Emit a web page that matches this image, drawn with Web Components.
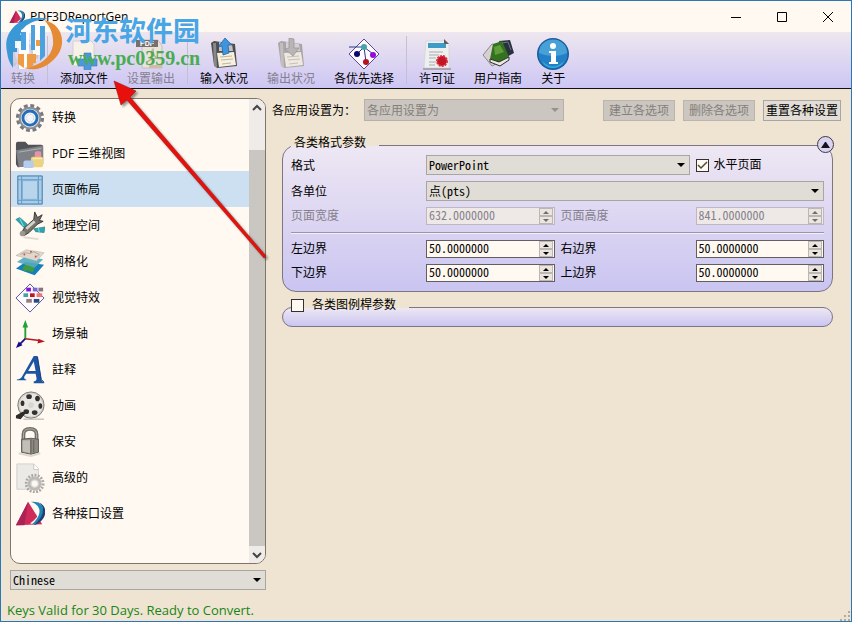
<!DOCTYPE html>
<html lang="zh">
<head>
<meta charset="utf-8">
<title>PDF3DReportGen</title>
<style>
    html, body {
        margin: 0;
        height: 100%;
    }
    body {
        font: 12px/16px "Liberation Sans", "Noto Sans CJK SC", sans-serif;
        color: #000;
    }
</style>
</head>
<body>
<report-app></report-app>

<script>
const ICONS = {
    logo: `<path d="M1 28 14 3 29 27z" fill="#d02a5a"/><path d="M14 3 1 28h9z" fill="#ab2257"/><path d="M18 5c12 2 10 13-2 21l5 1c12-9 11-22-3-22z" fill="#fff9f1"/><path d="M17 3c15-2 18 13 4 24h-3c11-10 11-20-1-24z" fill="#1e86b5"/><path d="M20 3c14 1 12 15 0 25 17-6 16-25 0-25z" fill="#1d3f7a"/>`,
    convert: `<circle cx="16" cy="16" r="13" fill="none" stroke="#c9c4cf" stroke-width="5" stroke-dasharray="4 3"/><circle cx="16" cy="16" r="10" fill="none" stroke="#d2cdd8" stroke-width="4"/>`,
    addFile: `<path d="M5 3h18l3 3v22H5z" fill="#f8f1e8" stroke="#d5cfd5"/><path d="M16 15h7v6h6v7h-6v5h-7v-5h-6v-7h6z" fill="#4d97dc" stroke="#3978c0" stroke-width=".6"/>`,
    setOutput: `<path d="M7 2h16l4 6v22H7z" fill="#eae3dc" stroke="#c4bec0"/><path d="M1 2h22v7H1z" fill="#77706d"/><text x="12" y="8" font-size="7" font-weight="700" font-family="Liberation Sans" text-anchor="middle" fill="#fff">PDF</text><path d="M12 24c6-3 7-10 6-13-3 2 2 10 8 10-5-2-10 0-14 3z" fill="none" stroke="#c5b39a" stroke-width="1.5"/><path d="M14 27h13v3H14z" fill="#d3bba9"/>`,
    input: `<path d="m3 5 3-2 21 3 2 22-20 2-3-3z" fill="#4e4e50"/><path d="m5 5 1 23 3 2-1-25z" fill="#8a8888"/><path d="m9 15 17-1 2 13-17 2z" fill="#f6f0dc"/><path d="m12 19 12-1m-11 4 12-1m-11 5 9-1" stroke="#bcb6a6"/><path d="m11 4 13 2 1 7H11z" fill="#c3c2c6"/><path d="m17 0 7 7h-4l1 8-6 2-1-9-4 1z" fill="#3f95dd" stroke="#175a9d" stroke-width=".7"/>`,
    output: `<path d="m3 5 3-2 21 3 2 22-20 2-3-3z" fill="#a9a6a7"/><path d="m5 5 1 23 3 2-1-25z" fill="#c3bfc0"/><path d="m9 15 17-1 2 13-17 2z" fill="#eee8df"/><path d="m12 19 12-1m-11 4 12-1m-11 5 9-1" stroke="#c6c0ba"/><path d="m11 4 13 2 1 7H11z" fill="#d4d1d4"/><path d="m14 0 5 1v9h5l-6 8-8-7 4-1z" fill="#b9b4b6" stroke="#969094" stroke-width=".7"/>`,
    prefs: `<path d="M16 1 31 16 16 31 1 16z" fill="#fffaff" stroke="#554a9a"/><path d="M1 9h15M16 9 9 16M16 9l9 7M16 9l2 15" stroke="#283b80"/><circle cx="16" cy="9" r="3" fill="#49a3ac"/><circle cx="9" cy="16" r="3" fill="#07076e"/><circle cx="25" cy="17" r="3" fill="#9709e3"/><circle cx="18" cy="24" r="3" fill="#b5121d"/>`,
    license: `<path d="M5 3h20l3 3v24H3z" fill="#edf0ee" stroke="#d2d0d2" stroke-width=".6"/><path d="M7 5h18v5H7z" fill="#3c9bc7"/><path d="m23 1 5 5h-5z" fill="#665c60"/><path d="M8 14h14M8 17h10M8 20h7M8 24h7M8 27h6" stroke="#a9aaae"/><path d="M2 31h28" stroke="#aaa4b0" stroke-width="2"/><circle cx="21" cy="23" r="5" fill="#c41525" stroke="#da3041" stroke-width="2" stroke-dasharray="2 1"/>`,
    guide: `<path d="m1 17 9-11 12 3-6 16-6 3z" fill="#d6d0d0" stroke="#8e888c"/><path d="m17 3 11-1 4 13-9 5z" fill="#28313d"/><path d="m11 6 9-3 7 16-10 5-9-3z" fill="#35721f"/><path d="m8 21 9 3 10-5v3l-9 6-10-4z" fill="#eee9e4" stroke="#282f2a"/><path d="m12 9 6-2 4 7-9 3z" fill="#5e9d3a"/><path d="m20 5 6-1 3 8" fill="none" stroke="#6d7986"/>`,
    about: `<circle cx="16" cy="16" r="16" fill="#1a5c9e"/><circle cx="16" cy="16" r="14.500" fill="#2480c6"/><path d="M2 15C2-3 30-3 30 15c-8 4-19 4-28 0z" fill="#5bb0df" opacity=".65"/><path d="M5 23q11 11 22 0-3 7-11 7T5 23z" fill="#37c0ed" opacity=".7"/><circle cx="16" cy="8" r="3" fill="#fff"/><path d="M12 13h7v11h2v2h-9v-2h2v-9h-2z" fill="#fff"/>`,
    gear: `<circle cx="16" cy="16" r="13" fill="none" stroke="#77797e" stroke-width="4" stroke-dasharray="4 2.800"/><circle cx="16" cy="16" r="11" fill="#d6d8db" stroke="#8b8f96" stroke-width="2"/><circle cx="16" cy="16" r="7.500" fill="#f2f5fa" stroke="#246eb9" stroke-width="3"/><circle cx="16" cy="16" r="4" fill="none" stroke="#c3cfdf" stroke-dasharray="2 1"/>`,
    folder: `<path d="M1 5q0-2 2-2h8l3 3h14q2 0 2 2v19L3 30 1 27z" fill="#505256"/><path d="m1 12 29-5v20L4 30z" fill="#7e8187"/><path d="m4 14 24-4" stroke="#b2b3b8"/><rect x="21" y="13" width="7" height="7" rx="2" fill="#e594a1"/><rect x="17" y="19" width="13" height="11" rx="2" fill="#eed37f"/><path d="M19 21h10" stroke="#fff1bd"/><rect x="9" y="23" width="11" height="8" rx="2" fill="#b4cdec"/>`,
    layout: `<path d="M3 1h26v30H3z" fill="#a9cde8" stroke="#3b719d"/><path d="M7 1v30M25 1v30M3 5h26M3 27h26" stroke="#5f9bc8"/><path d="M8 6h16v20H8z" fill="#b8d5eb" stroke="#7caed3"/>`,
    satellite: `<path d="m1 9 4-2 8 7-3 4zM20 19l12-2-1 6-9-1z" fill="#28a9b2" stroke="#277982" stroke-width=".7"/><path d="m5 8 4 8M25 18l1 5" stroke="#97dfe0"/><path d="m7 23 3-5 10-9 5 4-10 10-5 3z" fill="#77746c" stroke="#34332f"/><path d="m12 19 9-8" stroke="#d5d2c7" stroke-width="3"/><path d="m20 9 1-8 3 6 5-3-3 6 4 1-6 3" fill="#706b68" stroke="#3a3634"/><circle cx="8" cy="24" r="3" fill="#9c988f"/><path d="m9 28 16 2" stroke="#dedbd3" stroke-width="2"/>`,
    grid: `<path d="m1 23 10-7 20 3-10 11z" fill="#167fb9"/><path d="m8 22 5-5 9 2-3 8-6-2-3 1z" fill="#3f9b3e"/><path d="m2 16 9-6 19 3-9 9z" fill="#52a8bf" opacity=".9"/><path d="m1 9 11-6 19 3-8 9z" fill="#ddd8d0" stroke="#aaa79e" stroke-width=".5"/><path d="m6 8 4-2 6 1 4-2 6 3-5 4" fill="none" stroke="#c7a18f"/><circle cx="10" cy="8" r="1" fill="#c45246"/><circle cx="17" cy="5" r="1" fill="#c45246"/><circle cx="22" cy="10" r="1" fill="#c45246"/>`,
    effects: `<path d="M16 1 31 16 16 31 1 16z" fill="#fffaff" stroke="#504f8c"/><path d="M12 5h5v4h-5z" fill="#8910d5"/><path d="M19 5h5v4h-5z" fill="#7866d6"/><path d="M25 5h5v4h-5z" fill="#84718d"/><path d="M9 11h5v4H9z" fill="#43a2a7"/><path d="M16 11h5v4h-5z" fill="#bb1820"/><path d="M23 11h6v4h-6z" fill="#ed7774"/><path d="M12 17h6v4h-6z" fill="#967f7d"/><path d="M20 17h6v4h-6z" fill="#254b82"/>`,
    axes: `<path d="M11 21V6" stroke="#1fa332" stroke-width="2"/><path d="m11 1 3 8H8z" fill="#1fa332"/><path d="m11 21 15 2" stroke="#b21a22" stroke-width="1.500"/><path d="m32 24-8 2 1-5z" fill="#b21a22"/><path d="m11 21-6 6" stroke="#1d1487" stroke-width="2"/><path d="m1 31 3-7 4 4z" fill="#15088e"/>`,
    note: `<path fill-rule="evenodd" d="M2 26q4 0 6-4L20 1h4l4 24q0 3 3 4v1H20v-2q3 0 3-3l-1-5H12l-2 3q-1 3 2 3v1H2zM14 17h8L20 7z" fill="#1d55a3"/><path d="m24 2 4 24 3 3" fill="none" stroke="#153a79"/>`,
    film: `<circle cx="17" cy="15" r="14" fill="#d3d2d0" stroke="#777572"/><circle cx="17" cy="15" r="12" fill="#e9e7e3"/><g fill="#34302d"><ellipse cx="15" cy="6" rx="3" ry="2.500"/><ellipse cx="24" cy="8" rx="2.500" ry="3"/><ellipse cx="27" cy="16" rx="2" ry="3"/><ellipse cx="21" cy="23" rx="3" ry="2.500"/><ellipse cx="12" cy="22" rx="3" ry="2.500"/><ellipse cx="8" cy="13" rx="2" ry="3"/></g><circle cx="17" cy="15" r="3" fill="#d8d6d3"/><path d="m8 22 4 1-6 7-5-1v-3z" fill="#302b29"/><path d="M9 30h22" stroke="#aaa49d"/>`,
    lock: `<path d="M9 14V8q0-6 7-6t7 6v6" fill="none" stroke="#716d68" stroke-width="4"/><path d="M9 14V8q0-6 7-6t7 6v6" fill="none" stroke="#b8b5ae"/><path d="m7 13 10-1 8 1v14l-8 2-10-2z" fill="#8d8a83" stroke="#5b5752"/><path d="M8 14h8v14l-8-2z" fill="#c2bfb7"/><path d="M17 13v15M20 14v13" stroke="#615c55"/><path d="m4 28 13 3 10-3" fill="none" stroke="#ddd7cf" stroke-width="2"/>`,
    advanced: `<path d="M2 1h18l5 5v22H2z" fill="#eceae7" stroke="#d0ceca"/><path d="M20 1v6h5" fill="#fff" stroke="#c5c3bf"/><circle cx="21" cy="22" r="9" fill="none" stroke="#aaa7a4" stroke-width="3" stroke-dasharray="2 1.500"/><circle cx="21" cy="22" r="6" fill="#dedbd8" stroke="#bcb9b6" stroke-width="3"/><circle cx="21" cy="22" r="3" fill="#fff8f0"/>`,
};

const icon = (name, size = 32) => `<svg width="${size}" height="${size}" viewBox="0 0 32 32" fill="none" aria-hidden="true">${ICONS[name]}</svg>`;

// Base class, every element clones its own markup into a ShadowDOM
class Component extends HTMLElement{
    constructor(){
        super();
        let template = document.createElement('template');
        template.innerHTML = '<style>* { box-sizing: border-box; } button, input, select { font: inherit; color: inherit; margin: 0; } svg { display: block; flex: none; }</style>' + this.markup();
        this.attachShadow({mode: 'open'}).append(template.content.cloneNode(true));
    }
}

class TitleBar extends Component{
    markup(){
        return `
            <style>
                :host {
                    display: flex;
                    align-items: center;
                    height: 31px;
                    padding-left: 8px;
                    background: #fff9f1;
                    font-family: "Open Sans", sans-serif;
                }
                span { flex: 1; margin-left: 5px; }
                button {
                    display: grid;
                    place-items: center;
                    width: 46px;
                    height: 30px;
                    padding: 0;
                    border: 0;
                    background: none;
                }
            </style>
            ${icon('logo', 16)}
            <span><slot></slot></span>
            <button aria-label="Minimize"><svg width="12" height="12" stroke="#000"><path d="M1 6.500h10"/></svg></button>
            <button aria-label="Maximize"><svg width="12" height="12" stroke="#000" fill="none"><path d="M1.500 1.500h9v9h-9z"/></svg></button>
            <button aria-label="Close"><svg width="12" height="12" stroke="#000"><path d="m1 1 10 10M11 1 1 11"/></svg></button>
        `
    }
}

class ToolButton extends Component{
    markup(){
        return `
            <style>
                :host { display: block; }
                button {
                    display: flex;
                    flex-direction: column;
                    align-items: center;
                    gap: 1px;
                    padding: 6px 9px 1px;
                    border: 0;
                    background: none;
                    white-space: nowrap;
                }
                button:disabled { color: #85808f; }
                svg { margin: 0 -4px; }
            </style>
            <button ${this.hasAttribute('disabled') ? 'disabled' : ''}>
                ${icon(this.getAttribute('icon'))}
                <slot></slot>
            </button>
        `
    }
}

class ToolBar extends Component{
    markup(){
        return `
            <style>
                :host {
                    display: flex;
                    gap: 1px;
                    padding-left: 1px;
                    border-bottom: 1px solid #111;
                    background: linear-gradient(#eee7ef, #cdc6f4);
                }
                ::slotted(i) {
                    width: 1px;
                    margin: 4px 2px;
                    background: #c6bfd2;
                }
            </style>
            <slot></slot>
        `
    }
}

class SideItem extends Component{
    markup(){
        return `
            <style>
                :host { display: block; }
                button {
                    display: flex;
                    align-items: center;
                    gap: 7px;
                    width: 100%;
                    height: 36px;
                    padding: 1px 4px 0;
                    border: 0;
                    background: none;
                    text-align: left;
                    font-family: "Open Sans", "Noto Sans CJK SC", sans-serif;
                }
                :host([selected]) button { background: #cce0f1; }
            </style>
            <button>${icon(this.getAttribute('icon'), 30)}<slot></slot></button>
        `
    }
}

class SideList extends Component{
    markup(){
        return `
            <style>
                :host {
                    display: flex;
                    flex: 1;
                    min-height: 0;
                    overflow: hidden;
                    border: 1px solid #80756c;
                    border-radius: 10px;
                    background: #fff9f1;
                }
                nav { flex: 1; }
                .bar {
                    display: flex;
                    flex-direction: column;
                    width: 16px;
                    background: #efebe8;
                }
                .bar button {
                    display: grid;
                    place-items: center;
                    height: 17px;
                    padding: 0;
                    border: 0;
                    background: none;
                }
                .thumb {
                    flex: 1;
                    margin-top: 34px;
                    background: #cac6c2;
                }
            </style>
            <nav><slot></slot></nav>
            <div class="bar">
                <button aria-label="Up"><svg width="10" height="10" fill="none" stroke="#444" stroke-width="2"><path d="m1 7 4-4 4 4"/></svg></button>
                <div class="thumb"></div>
                <button aria-label="Down"><svg width="10" height="10" fill="none" stroke="#444" stroke-width="2"><path d="m1 3 4 4 4-4"/></svg></button>
            </div>
        `
    }
}

// Label and drop-down. The host has no box, so both land in the parent's grid or flex
class ComboBox extends Component{
    markup(){
        let label = this.getAttribute('label');
        return `
            <style>
                :host { display: contents; }
                label { align-self: center; padding-top: 1px; white-space: nowrap; }
                .box {
                    display: grid;
                    align-items: center;
                    grid-column: span var(--span, 1);
                    width: var(--combo-width, auto);
                }
                select {
                    grid-area: 1 / 1;
                    appearance: none;
                    width: 100%;
                    height: var(--combo-height, 20px);
                    padding: 0 20px 0 2px;
                    border: 1px solid #a9a5a2;
                    border-radius: 0;
                    background: #e0dcd6;
                    font-family: "Noto Sans CJK SC", sans-serif;
                    font-feature-settings: "hwid";
                }
                select:disabled { background: #cbc6c0; border-color: #b7b1aa; color: #85807b; opacity: 1; }
                svg { grid-area: 1 / 1; justify-self: end; margin-right: 5px; pointer-events: none; }
                select:disabled + svg { fill: #96918c; }
            </style>
            ${label ? `<label for="field">${label}</label>` : ''}
            <div class="box">
                <select id="field" ${label ? '' : 'aria-label="Language"'} ${this.hasAttribute('disabled') ? 'disabled' : ''}>
                    <option>${this.getAttribute('value')}</option>
                </select>
                <svg width="8" height="4"><path d="M0 0h8L4 4z"/></svg>
            </div>
        `
    }
}

class SpinBox extends Component{
    markup(){
        let disabled = this.hasAttribute('disabled') ? 'disabled' : '';
        return `
            <style>
                :host { display: contents; }
                :host([disabled]) { --line: #bdb8bf; --face: #eee8e6; --arrow: #716c70; --text: #85808c; }
                label { align-self: center; color: var(--text, inherit); }
                .box {
                    display: flex;
                    min-width: 0;
                    height: 18px;
                    padding-right: 1px;
                    border: 1px solid var(--line, #625e61);
                    background: var(--face, #fff9f1);
                }
                input {
                    flex: 1;
                    min-width: 0;
                    padding: 0 2px 2px;
                    border: 0;
                    background: none;
                    color: var(--text, inherit);
                    font-family: "Noto Sans CJK SC", sans-serif;
                    font-feature-settings: "hwid";
                }
                .arrows {
                    display: flex;
                    flex-direction: column;
                    width: 14px;
                }
                .arrows button {
                    display: grid;
                    place-items: center;
                    flex: 1;
                    min-height: 0;
                    padding: 0;
                    border: 1px solid #bcb7b3;
                    background: #eae5df;
                }
                .arrows svg { fill: var(--arrow, #000); }
            </style>
            <label for="field">${this.getAttribute('label')}</label>
            <div class="box">
                <input id="field" type="text" value="${this.getAttribute('value')}" ${disabled}>
                <div class="arrows">
                    <button aria-label="+" ${disabled}><svg width="6" height="3"><path d="M0 3h6L3 0z"/></svg></button>
                    <button aria-label="-" ${disabled}><svg width="6" height="3"><path d="M0 0h6L3 3z"/></svg></button>
                </div>
            </div>
        `
    }
}

class CheckBox extends Component{
    markup(){
        return `
            <style>
                :host { display: flex; align-items: center; }
                label { display: flex; align-items: center; gap: var(--check-gap, 5px); }
                .tick { display: grid; place-items: center; }
                input {
                    grid-area: 1 / 1;
                    appearance: none;
                    width: 13px;
                    height: 13px;
                    border: 1px solid #33302f;
                    background: #fff9f1;
                }
                svg { grid-area: 1 / 1; visibility: hidden; pointer-events: none; }
                input:checked + svg { visibility: visible; }
            </style>
            <label>
                <span class="tick">
                    <input type="checkbox" ${this.hasAttribute('checked') ? 'checked' : ''}>
                    <svg width="11" height="11" fill="none" stroke="#4c4a38" stroke-width="1.500"><path d="m1 5 3 3 6-6"/></svg>
                </span>
                <slot></slot>
            </label>
        `
    }
}

class PushButton extends Component{
    markup(){
        return `
            <style>
                :host { display: block; }
                button {
                    height: 21px;
                    padding: 1px var(--pad, 5px) 0;
                    border: 1px solid #a9a5a0;
                    background: #e2ddd6;
                    white-space: nowrap;
                }
                button:disabled { background: #cbc6c0; border-color: #bbb5ad; color: #85807b; }
            </style>
            <button ${this.hasAttribute('disabled') ? 'disabled' : ''}><slot></slot></button>
        `
    }
}

class ParamGroup extends Component{
    markup(){
        return `
            <style>
                :host { display: block; position: relative; }
                fieldset {
                    min-width: 0;
                    margin: 0;
                    padding: 0 8px 9px;
                    border: 1px solid #7d7581;
                    border-radius: 14px;
                    background: linear-gradient(#eee7f3, #cac5f1);
                }
                legend {
                    height: 20px;
                    padding: 0 13px 4px 0;
                }
                .fold {
                    position: absolute;
                    top: 1px;
                    right: -1px;
                    width: 17px;
                    height: 17px;
                    display: grid;
                    place-items: center;
                    padding: 0;
                    border: 1px solid #3c3842;
                    border-radius: 50%;
                    background: #d9d5f0;
                }
                .grid {
                    display: grid;
                    grid-template-columns: 129px minmax(0, 1fr) 129px minmax(0, 1fr);
                    gap: 6px;
                }
            </style>
            <fieldset>
                <legend><slot name="title"></slot></legend>
                <div class="grid"><slot></slot></div>
            </fieldset>
            ${this.hasAttribute('foldable') ? '<button class="fold" aria-label="Collapse"><svg width="9" height="6"><path d="M0 6h9L5 0H4z" fill="#15121f"/></svg></button>' : ''}
        `
    }
}

// Site stamp and pointer, laid over the window
class SiteStamp extends Component{
    markup(){
        return `
            <style>
                :host {
                    position: absolute;
                    top: 12px;
                    left: 4px;
                    display: flex;
                    gap: 2px;
                    pointer-events: none;
                }
                .name {
                    font: 700 27px/34px "Noto Sans CJK SC", sans-serif;
                    color: #48a5e6;
                    white-space: nowrap;
                }
                .url {
                    padding-left: 3px;
                    font: 700 20px/22px "Liberation Serif", serif;
                    color: #48ad52;
                }
            </style>
            <svg width="58" height="60" viewBox="0 0 58 60" fill="none">
                <path d="M2 39C-3 17 17 0 44 6 27 7 18 12 15 22h6v7h-9v10H8v16Q3 48 2 39z" fill="#3998d5"/>
                <path d="M10 28h6V17l10-5h10v30h-8V20h-4v36H14V35h-4z" fill="#fff" opacity=".9"/>
                <path d="M16 19h5v18h-5zM26 12h4v25h-4z" fill="#4ba2de"/>
                <path d="M39 7c20 4 25 28 7 42-8 7-18 9-27 6 17-2 27-11 29-23 1-12-4-20-9-25z" fill="#e58b35"/>
                <path d="M13 41h6v14l-6-4zM22 41h6v13l-6 1zM31 27h8v6h-8v17h-4V41h4z" fill="#ee9b45"/>
                <path d="M35 13h5v30l-5 5z" fill="#4ba2de"/>
            </svg>
            <div>
                <div class="name">河东软件园</div>
                <div class="url">www.pc0359.cn</div>
            </div>
        `
    }
}

class PointerArrow extends Component{
    markup(){
        return `
            <style>
                :host {
                    position: absolute;
                    top: 79px;
                    left: 112px;
                    pointer-events: none;
                    filter: drop-shadow(2px 2px 1px #0006);
                }
            </style>
            <svg width="160" height="184"><path d="m1 1 22 10-6 6 136 159-2 2L14 20l-6 5z" fill="#e8100c" stroke="#a81512" stroke-width=".6"/></svg>
        `
    }
}

class ReportApp extends Component{
    markup(){
        return `
            <style>
                :host {
                    position: relative;
                    display: flex;
                    flex-direction: column;
                    height: 100%;
                    min-height: 100vh;
                    box-sizing: border-box;
                    border: 1px solid #2a77b5;
                    background: #efe4d2;
                }
                main {
                    display: flex;
                    flex: 1;
                    gap: 6px;
                    min-height: 0;
                    padding: 9px 10px 0 9px;
                }
                aside {
                    display: flex;
                    flex: none;
                    flex-direction: column;
                    gap: 6px;
                    width: 256px;
                }
                section { flex: 1; min-width: 0; }
                .settings {
                    display: flex;
                    align-items: center;
                    gap: 8px;
                    margin: 1px 0 14px;
                    --combo-width: 200px;
                    --combo-height: 22px;
                }
                .settings push-button:first-of-type { margin-left: auto; }
                .groups {
                    display: flex;
                    flex-direction: column;
                    gap: 5px;
                    padding: 0 8px 0 10px;
                }
                hr {
                    grid-column: 1 / -1;
                    width: 100%;
                    height: 2px;
                    margin: 1px 0 0;
                    border: 0;
                    border-top: 1px solid #9b96a5;
                    background: #f4effa;
                }
                .wide { --span: 3; }
                .half { --span: 2; }
                .indent { padding-left: 3px; }
                footer {
                    display: flex;
                    align-items: center;
                    justify-content: space-between;
                    height: 31px;
                    padding: 9px 1px 0 6px;
                    font-size: 13px;
                    font-family: "Open Sans", sans-serif;
                    color: #178417;
                }
                footer svg { align-self: end; }
            </style>
            <title-bar>PDF3DReportGen</title-bar>
            <tool-bar>
                <tool-button icon="convert" disabled>转换</tool-button>
                <i></i>
                <tool-button icon="addFile">添加文件</tool-button>
                <tool-button icon="setOutput" disabled>设置输出</tool-button>
                <i></i>
                <tool-button icon="input">输入状况</tool-button>
                <tool-button icon="output" disabled>输出状况</tool-button>
                <tool-button icon="prefs">各优先选择</tool-button>
                <i></i>
                <tool-button icon="license">许可证</tool-button>
                <tool-button icon="guide">用户指南</tool-button>
                <tool-button icon="about">关于</tool-button>
            </tool-bar>
            <main>
                <aside>
                    <side-list>
                        <side-item icon="gear">转换</side-item>
                        <side-item icon="folder">PDF 三维视图</side-item>
                        <side-item icon="layout" selected>页面佈局</side-item>
                        <side-item icon="satellite">地理空间</side-item>
                        <side-item icon="grid">网格化</side-item>
                        <side-item icon="effects">视觉特效</side-item>
                        <side-item icon="axes">场景轴</side-item>
                        <side-item icon="note">註释</side-item>
                        <side-item icon="film">动画</side-item>
                        <side-item icon="lock">保安</side-item>
                        <side-item icon="advanced">高级的</side-item>
                        <side-item icon="logo">各种接口设置</side-item>
                    </side-list>
                    <combo-box value="Chinese"></combo-box>
                </aside>
                <section>
                    <div class="settings">
                        <combo-box label="各应用设置为：" value="各应用设置为" disabled></combo-box>
                        <push-button disabled>建立各选项</push-button>
                        <push-button disabled>删除各选项</push-button>
                        <push-button style="--pad: 2px">重置各种设置</push-button>
                    </div>
                    <div class="groups">
                        <param-group foldable>
                            <span slot="title" class="indent">各类格式参数</span>
                            <combo-box class="half" label="格式" value="PowerPoint"></combo-box>
                            <check-box checked>水平页面</check-box>
                            <combo-box class="wide" label="各单位" value="点(pts)"></combo-box>
                            <spin-box label="页面宽度" value="632.0000000" disabled></spin-box>
                            <spin-box label="页面高度" value="841.0000000" disabled></spin-box>
                            <hr>
                            <spin-box label="左边界" value="50.0000000"></spin-box>
                            <spin-box label="右边界" value="50.0000000"></spin-box>
                            <spin-box label="下边界" value="50.0000000"></spin-box>
                            <spin-box label="上边界" value="50.0000000"></spin-box>
                        </param-group>
                        <param-group>
                            <check-box slot="title" style="--check-gap: 8px">各类图例桿参数</check-box>
                        </param-group>
                    </div>
                </section>
            </main>
            <footer>
                Keys Valid for 30 Days. Ready to Convert.
                <svg width="10" height="10" fill="#b3aa9c"><path d="M8 0h2v2H8zM4 4h2v2H4zM8 4h2v2H8zM0 8h2v2H0zM4 8h2v2H4zM8 8h2v2H8z"/></svg>
            </footer>
            <site-stamp></site-stamp>
            <pointer-arrow></pointer-arrow>
        `
    }
}

customElements.define('title-bar', TitleBar)
customElements.define('tool-button', ToolButton)
customElements.define('tool-bar', ToolBar)
customElements.define('side-item', SideItem)
customElements.define('side-list', SideList)
customElements.define('combo-box', ComboBox)
customElements.define('spin-box', SpinBox)
customElements.define('check-box', CheckBox)
customElements.define('push-button', PushButton)
customElements.define('param-group', ParamGroup)
customElements.define('site-stamp', SiteStamp)
customElements.define('pointer-arrow', PointerArrow)
customElements.define('report-app', ReportApp)
</script>
</body>
</html>
